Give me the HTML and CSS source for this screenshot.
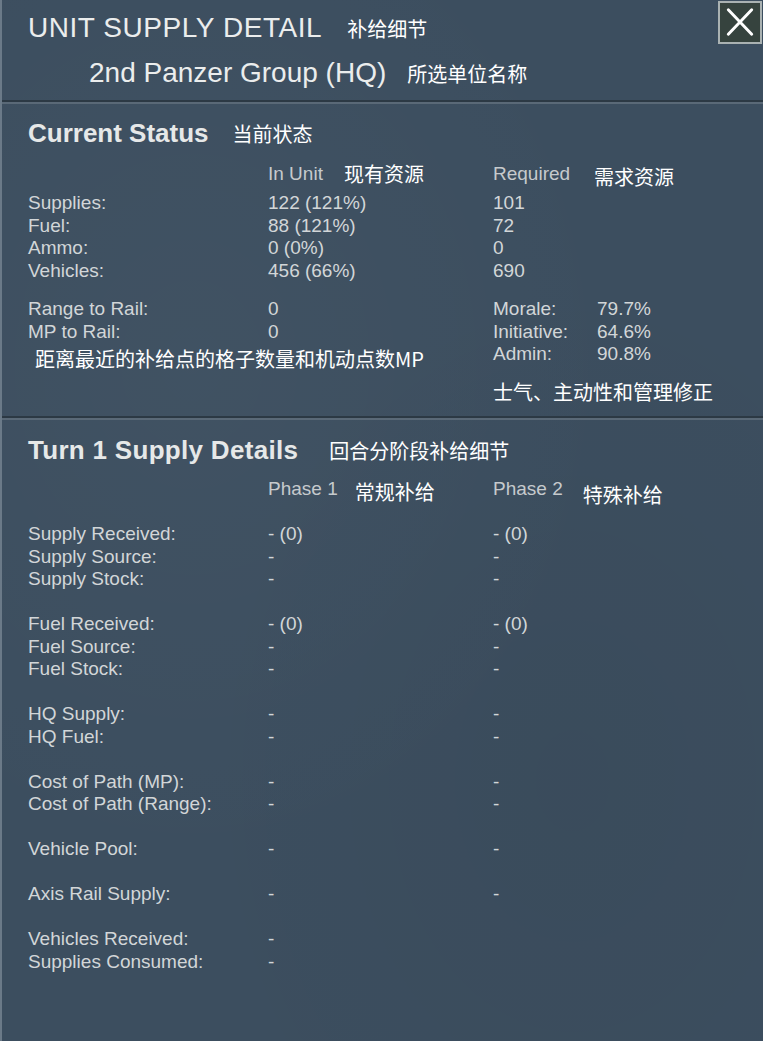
FILE: index.html
```html
<!DOCTYPE html>
<html>
<head>
<meta charset="utf-8">
<title>Unit Supply Detail</title>
<link rel="stylesheet" href="styles.css">
</head>
<body>
<div class="window">
<div class="header">
<div class="title-row"><span class="title main">UNIT SUPPLY DETAIL</span><span class="ann">补给细节</span></div>
<div class="title-row unit"><span class="title">2nd Panzer Group (HQ)</span><span class="ann">所选单位名称</span></div>
<button class="close" title="Close"><svg viewBox="0 0 40 40" width="40" height="39"><path d="M8 7L32 32M32 7L8 32" stroke="#fff" stroke-width="3" stroke-linecap="round"/></svg></button>
</div>

<div class="section status">
<div class="sec-head"><h2>Current Status</h2><span class="ann">当前状态</span></div>
<div class="grid head">
<div></div>
<div class="hcell">In Unit<span class="ann gap-m">现有资源</span></div>
<div class="hcell wide">Required<span class="ann gap-l low">需求资源</span></div>
</div>
<div class="grid data">
<div>Supplies:</div><div>122 (121%)</div><div>101</div><div></div>
<div>Fuel:</div><div>88 (121%)</div><div>72</div><div></div>
<div>Ammo:</div><div>0 (0%)</div><div>0</div><div></div>
<div>Vehicles:</div><div>456 (66%)</div><div>690</div><div></div>
</div>
<div class="grid rail">
<div>Range to Rail:</div><div>0</div><div>Morale:</div><div>79.7%</div>
<div>MP to Rail:</div><div>0</div><div>Initiative:</div><div>64.6%</div>
<div class="ann note wide">距离最近的补给点的格子数量和机动点数MP</div><div>Admin:</div><div>90.8%</div>
<div class="wide"></div><div class="ann mods wide">士气、主动性和管理修正</div>
</div>
</div>

<div class="section turn">
<div class="sec-head"><h2>Turn 1 Supply Details</h2><span class="ann gap-xl">回合分阶段补给细节</span></div>
<div class="grid head">
<div></div>
<div class="hcell">Phase 1<span class="ann gap-s low">常规补给</span></div>
<div class="hcell wide">Phase 2<span class="ann gap-t lower">特殊补给</span></div>
</div>
<div class="grid group">
<div>Supply Received:</div><div>- (0)</div><div>- (0)</div><div></div>
<div>Supply Source:</div><div>-</div><div>-</div><div></div>
<div>Supply Stock:</div><div>-</div><div>-</div><div></div>
</div>
<div class="grid group">
<div>Fuel Received:</div><div>- (0)</div><div>- (0)</div><div></div>
<div>Fuel Source:</div><div>-</div><div>-</div><div></div>
<div>Fuel Stock:</div><div>-</div><div>-</div><div></div>
</div>
<div class="grid group">
<div>HQ Supply:</div><div>-</div><div>-</div><div></div>
<div>HQ Fuel:</div><div>-</div><div>-</div><div></div>
</div>
<div class="grid group">
<div>Cost of Path (MP):</div><div>-</div><div>-</div><div></div>
<div>Cost of Path (Range):</div><div>-</div><div>-</div><div></div>
</div>
<div class="grid group">
<div>Vehicle Pool:</div><div>-</div><div>-</div><div></div>
</div>
<div class="grid group">
<div>Axis Rail Supply:</div><div>-</div><div>-</div><div></div>
</div>
<div class="grid group">
<div>Vehicles Received:</div><div>-</div><div></div><div></div>
<div>Supplies Consumed:</div><div>-</div><div></div><div></div>
</div>
</div>
</div>
</body>
</html>
```

FILE: styles.css
```css
body{margin:0;background:#3c4e5f;font-family:"Liberation Sans",Arial,sans-serif;color:#d2d6d8}
.window{position:relative;min-height:1041px;box-sizing:border-box;border-left:2px solid #6b7a88;
background:radial-gradient(ellipse at 25% 35%,rgba(255,255,255,0.025),transparent 55%),radial-gradient(ellipse at 75% 75%,rgba(0,0,0,0.035),transparent 50%),#3c4e5f}
.ann{font-family:"Noto Sans CJK SC",sans-serif;font-size:20px;line-height:22.5px;color:#fff}
.gap-s{margin-left:17px}
.gap-t{margin-left:20px}
.gap-m{margin-left:21px}
.gap-l{margin-left:24px}
.gap-xl{margin-left:31px}
.low{margin-top:3px}
.lower{margin-top:6px}

.header{padding:11px 0 10px 26px;border-bottom:2px solid #2c3944}
.title-row{display:flex;align-items:baseline;height:34px}
.title-row .ann{margin-left:25px}
.title{font-size:28px;line-height:34px;color:#ebeded}
.main{letter-spacing:0.55px}
.unit{margin:11px 0 0 61px}
.unit .ann{margin-left:21px}
.close{position:absolute;top:1px;right:1px;width:44px;height:43px;padding:0;display:flex;align-items:center;justify-content:center;background:#36433e;border:2px solid #aab2b2;cursor:pointer}

.section{padding:14px 0 13px 26px;border-top:2px solid #5a6977}
.status{border-bottom:2px solid #2c3944}
.turn{padding-top:15px;border-bottom:none}
.sec-head{display:flex;align-items:baseline}
.sec-head h2{margin:0;font-size:26px;line-height:30px;font-weight:bold;color:#e6e8e8}
.turn .sec-head h2{letter-spacing:0.3px}
.sec-head .ann{margin-left:24px}
.turn .sec-head .ann{margin-left:31px}

.grid{display:grid;grid-template-columns:240px 225px 104px 1fr;font-size:19px;line-height:22.5px}
.wide{grid-column:span 2}
.head{margin-top:15px;color:#c6cacd}
.turn .head{margin-top:13px}
.hcell{display:flex;align-items:flex-start;height:22.5px}
.data{margin-top:6.5px}
.rail{margin-top:16px}
.note{padding:5px 0 0 7px}
.mods{margin-top:10px}
.group{margin-bottom:22.5px}
.turn .head+.group{margin-top:22.5px}
```
